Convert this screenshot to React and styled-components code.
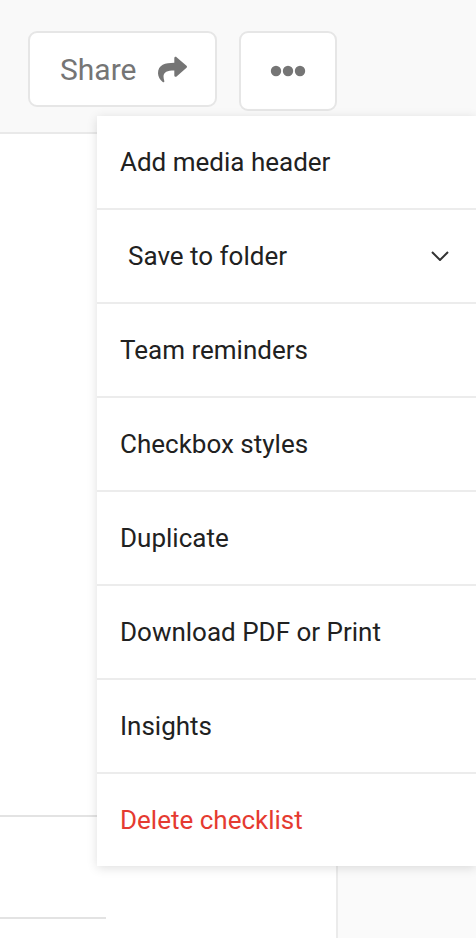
import React from 'react';
import styled, { createGlobalStyle } from 'styled-components';
import { FaShare } from 'react-icons/fa';

const GlobalStyle = createGlobalStyle`
  html, body {
    margin: 0;
    padding: 0;
    background: #fafafa;
  }
  body {
    font-family: Roboto, "Noto Sans", "Liberation Sans", sans-serif;
  }
  #root {
    height: 938px;
  }
`;

const Page = styled.div`
  position: relative;
  height: 938px;
  overflow: hidden;
  display: flex;
  flex-direction: column;
`;

const Header = styled.header`
  box-sizing: border-box;
  height: 134px;
  flex-shrink: 0;
  background: #f9f9f9;
  border-bottom: 2px solid #e9e9e9;
  display: flex;
  align-items: flex-start;
  gap: 22px;
  padding: 31px 0 0 28px;
`;

const HeaderButton = styled.button`
  box-sizing: border-box;
  width: ${(p) => p.$width}px;
  height: ${(p) => p.$height}px;
  background: #fff;
  border: 2px solid #e6e6e6;
  border-radius: 9px;
  display: flex;
  align-items: center;
  justify-content: ${(p) => (p.$center ? 'center' : 'flex-start')};
  gap: 22px;
  padding: 0 0 0 ${(p) => (p.$center ? 0 : 30)}px;
  font-family: inherit;
  font-size: 30px;
  color: #757575;
  cursor: pointer;
`;

const Body = styled.div`
  flex: 1;
  display: flex;
`;

const EditorColumn = styled.div`
  width: 336px;
  background: #fff;
  border-right: 2px solid #ebebeb;
  display: flex;
  flex-direction: column;
`;

const Section = styled.div`
  height: 681px;
  border-bottom: 2px solid #e3e3e3;
`;

const FieldLine = styled.div`
  width: 106px;
  margin-top: 100px;
  border-bottom: 2px solid #e3e3e3;
`;

const SideColumn = styled.div`
  flex: 1;
  background: #fafafa;
`;

const Menu = styled.ul`
  position: absolute;
  top: 116px;
  left: 97px;
  right: 0;
  margin: 0;
  padding: 0;
  list-style: none;
  background: #fff;
  box-shadow: 0 2px 10px rgba(0, 0, 0, 0.13);
`;

const MenuItem = styled.li`
  height: 92px;
  display: flex;
  align-items: center;
  justify-content: space-between;
  padding: 0 27px 0 ${(p) => (p.$indent ? 31 : 23)}px;
  font-size: 26px;
  color: ${(p) => (p.$danger ? '#e53a30' : '#212121')};
  border-bottom: 2px solid #ececec;

  &:last-child {
    border-bottom: none;
  }
`;

const Dots = () => (
  <svg width="36" height="12" viewBox="0 0 36 12">
    <circle cx="6" cy="6" r="5.2" fill="#757575" />
    <circle cx="18" cy="6" r="5.2" fill="#757575" />
    <circle cx="30" cy="6" r="5.2" fill="#757575" />
  </svg>
);

const Chevron = () => (
  <svg width="18" height="10" viewBox="0 0 18 10">
    <path d="M1 1 L9 9 L17 1" fill="none" stroke="#333" strokeWidth="2" />
  </svg>
);

const items = [
  { label: 'Add media header' },
  { label: 'Save to folder', indent: true, chevron: true },
  { label: 'Team reminders' },
  { label: 'Checkbox styles' },
  { label: 'Duplicate' },
  { label: 'Download PDF or Print' },
  { label: 'Insights' },
  { label: 'Delete checklist', danger: true },
];

export default function App() {
  return (
    <>
      <GlobalStyle />
      <Page>
        <Header>
          <HeaderButton $width={189} $height={76}>
            Share
            <FaShare size={29} color="#757575" />
          </HeaderButton>
          <HeaderButton $width={98} $height={80} $center>
            <Dots />
          </HeaderButton>
        </Header>
        <Body>
          <EditorColumn>
            <Section />
            <FieldLine />
          </EditorColumn>
          <SideColumn />
        </Body>
        <Menu>
          {items.map((it) => (
            <MenuItem key={it.label} $indent={it.indent} $danger={it.danger}>
              <span>{it.label}</span>
              {it.chevron && <Chevron />}
            </MenuItem>
          ))}
        </Menu>
      </Page>
    </>
  );
}
